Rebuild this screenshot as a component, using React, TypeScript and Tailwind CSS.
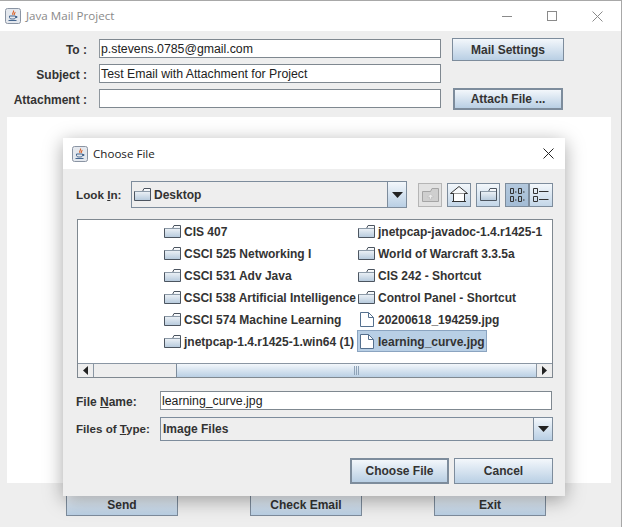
const font = "font-['Liberation_Sans',Arial,sans-serif]";

const JavaIcon = () => (
  <svg width="16" height="16" viewBox="0 0 16 16" className="shrink-0">
    <rect x="0.5" y="0.5" width="15" height="15" rx="2" fill="#e4e8ee" stroke="#8a94a3" />
    <path d="M8.5 2.5c1 1.500-2 2.500-.5 4.500M10 4c.5 1-1.500 1.500-.5 3" fill="none" stroke="#d9622b" strokeWidth="1.100" />
    <path d="M4.500 8h6v1.500c0 1-1 1.500-3 1.500s-3-.5-3-1.500zM10.500 8.500h1.500v1h-1.500M3.500 12.500h8" fill="none" stroke="#45668f" strokeWidth="1" />
  </svg>
);

const FolderIcon = () => (
  <svg width="17" height="13" viewBox="0 0 17 13" className="shrink-0">
    <defs>
      <linearGradient id="folderFill" x1="0" y1="0" x2="0" y2="1">
        <stop offset="0" stopColor="#ffffff" />
        <stop offset="1" stopColor="#b5c9dc" />
      </linearGradient>
    </defs>
    <path d="M0.500 3.500H8.500L10 0.500H16.500V12.500H0.500Z" fill="url(#folderFill)" stroke="#4c5560" />
    <path d="M1 3.500H16" stroke="#8c9aa8" />
  </svg>
);

const FileIcon = () => (
  <svg width="14" height="15" viewBox="0 0 14 15" className="ml-[2px] shrink-0">
    <path d="M0.500 0.500H8.500L13.500 5.500V14.500H0.500Z" fill="#ffffff" stroke="#55708e" />
    <path d="M8.500 0.500V5.500H13.500" fill="none" stroke="#55708e" />
  </svg>
);

const ArrowDown = () => (
  <svg width="11" height="6" viewBox="0 0 11 6">
    <path d="M0 0H11L5.500 6Z" fill="#222222" />
  </svg>
);

const Field = ({ value }: { value: string }) => (
  <div className="h-[19px] flex-1 border border-[#7f8890] border-l-[#8f979e] bg-white pl-[1px] text-[12.3px] leading-[19px] text-[#222222]">
    {value}
  </div>
);

const Button = ({ label, className }: { label: string; className: string }) => (
  <div
    className={`flex shrink-0 items-center justify-center bg-linear-to-b from-[#f3f7fb] to-[#b9cfe4] text-[12px] font-bold text-[#333333] ${className}`}
  >
    {label}
  </div>
);

const FormRow = ({ label, value, children }: { label: string; value: string; children?: React.ReactNode }) => (
  <div className="flex h-[25px] items-center">
    <div className="w-[87px] pt-[2px] text-right text-[12px] font-bold text-[#333333]">{label}</div>
    <div className="ml-[12px] flex w-[342px]">
      <Field value={value} />
    </div>
    {children}
  </div>
);

const Combo = ({ children, className }: { children: React.ReactNode; className: string }) => (
  <div className={`flex border border-[#7d8c9c] bg-[#eeeeee] ${className}`}>
    <div className="flex flex-1 items-center text-[12px] font-bold text-[#333333]">{children}</div>
    <div className="flex w-[19px] items-center justify-center border-l border-[#7d8c9c] bg-linear-to-b from-[#f3f7fb] to-[#b9cfe4]">
      <ArrowDown />
    </div>
  </div>
);

const ToolButton = ({ children, className }: { children: React.ReactNode; className?: string }) => (
  <div className={`flex h-[24px] w-[24px] items-center justify-center border border-[#7d8c9c] ${className ?? "bg-linear-to-b from-[#f3f7fb] to-[#c3d6e8]"}`}>
    {children}
  </div>
);

const col1 = [
  "CIS 407",
  "CSCI 525 Networking I",
  "CSCI 531 Adv Java",
  "CSCI 538 Artificial Intelligence",
  "CSCI 574 Machine Learning",
  "jnetpcap-1.4.r1425-1.win64 (1)",
];
const col2 = [
  { name: "jnetpcap-javadoc-1.4.r1425-1" },
  { name: "World of Warcraft 3.3.5a" },
  { name: "CIS 242 - Shortcut" },
  { name: "Control Panel - Shortcut" },
  { name: "20200618_194259.jpg", file: true },
  { name: "learning_curve.jpg", file: true, selected: true },
];

const FileRow = ({ name, file, selected }: { name: string; file?: boolean; selected?: boolean }) => (
  <div
    className={`flex h-[22px] items-center whitespace-nowrap text-[12px] font-bold text-[#333333] ${
      selected ? "w-[130px] border border-[#8ba4c0] bg-[#b8cfe5]" : "border border-transparent"
    }`}
  >
    <div className="flex w-[20px]">{file ? <FileIcon /> : <FolderIcon />}</div>
    <span className="pt-[2px]">{name}</span>
  </div>
);

const ChooseDialog = () => (
  <div className="absolute left-[63px] top-[138px] w-[502px] bg-[#eeeeee] shadow-[0_4px_18px_rgba(0,0,0,0.35)]">
    <div className="flex h-[31px] items-center bg-white pl-[9px] pr-[11px]">
      <JavaIcon />
      <span className="ml-[5px] font-['Open_Sans',sans-serif] text-[11.6px] text-[#222222]">Choose File</span>
      <svg width="11" height="11" viewBox="0 0 11 11" className="ml-auto">
        <path d="M0.500 0.500L10.500 10.500M10.500 0.500L0.500 10.500" stroke="#222222" />
      </svg>
    </div>

    <div className="pb-[12px] pl-[13px] pr-[12px]">
      <div className="mt-[12px] flex h-[27px] items-center">
        <div className="w-[55px] text-[11.7px] font-bold text-[#333333]">
          Look <u>I</u>n:
        </div>
        <Combo className="h-[27px] w-[276px]">
          <span className="ml-[2px] mr-[3px]">
            <FolderIcon />
          </span>
          Desktop
        </Combo>
        <div className="ml-[11px] flex gap-[5px]">
          <ToolButton className="border-[#b5b5b5] bg-[#e2e2e2]">
            <svg width="17" height="14" viewBox="0 0 17 14">
              <path d="M0.500 3.500H8.500L10 0.500H16.500V13.500H0.500Z" fill="#cfcfcf" stroke="#a5a5a5" />
              <path d="M8.500 6L5.500 9H7.500V11H9.500V9H11.500Z" fill="#eeeeee" stroke="#b5b5b5" strokeWidth="0.500" />
            </svg>
          </ToolButton>
          <ToolButton>
            <svg width="18" height="17" viewBox="0 0 18 17">
              <path d="M0.500 7.500L9 0.500L17.500 7.500Z" fill="#f8fafc" stroke="#333333" />
              <path d="M3.500 7.500V15.500H14.500V7.500" fill="#ffffff" stroke="#333333" />
              <path d="M2 15.500H16" stroke="#333333" />
            </svg>
          </ToolButton>
          <ToolButton>
            <FolderIcon />
          </ToolButton>
          <div className="flex">
            <ToolButton className="bg-linear-to-b from-[#b3c8dd] to-[#a3bcd5]">
              <svg width="15" height="14" viewBox="0 0 15 14" fill="none" stroke="#333333">
                <path d="M0.500 0.500H3.500V5.500H0.500ZM8.500 0.500H11.500V5.500H8.500ZM0.500 8.500H3.500V13.500H0.500ZM8.500 8.500H11.500V13.500H8.500Z" />
                <path d="M5 4H6.500M13 4H14.500M5 12H6.500M13 12H14.500" />
              </svg>
            </ToolButton>
            <ToolButton className="bg-linear-to-b from-[#f3f7fb] to-[#c3d6e8]">
              <svg width="16" height="14" viewBox="0 0 16 14" fill="none" stroke="#333333">
                <path d="M0.500 0.500H4.500V5.500H0.500ZM0.500 8.500H4.500V13.500H0.500Z" />
                <path d="M6 3.500H15.500M6 11.500H15.500" />
              </svg>
            </ToolButton>
          </div>
        </div>
      </div>

      <div className="ml-[1px] mt-[11px] h-[159px] w-[476px] border border-[#7f8890] bg-white">
        <div className="flex h-[143px] pl-[85px]">
          <div className="w-[194px]">
            {col1.map((name) => (
              <FileRow key={name} name={name} />
            ))}
          </div>
          <div>
            {col2.map((row) => (
              <FileRow key={row.name} {...row} />
            ))}
          </div>
        </div>
        <div className="flex h-[14px] border-t border-[#8a96a3]">
          <div className="flex w-[16px] items-center justify-center border-r border-[#8a96a3] bg-[#eeeeee]">
            <svg width="5" height="9" viewBox="0 0 5 9">
              <path d="M5 0V9L0 4.500Z" fill="#222222" />
            </svg>
          </div>
          <div className="w-[83px] border-r border-[#7d8c9c] bg-[#eeeeee]" />
          <div className="flex flex-1 items-center justify-center bg-linear-to-b from-[#f3f7fb] to-[#b9cfe4]">
            <div className="flex h-[9px] w-[5px] justify-center border-x border-[#8fa3b8]">
              <div className="w-[1px] bg-[#8fa3b8]" />
            </div>
          </div>
          <div className="flex w-[16px] items-center justify-center border-l border-[#8a96a3] bg-[#eeeeee]">
            <svg width="5" height="9" viewBox="0 0 5 9">
              <path d="M0 0V9L5 4.500Z" fill="#222222" />
            </svg>
          </div>
        </div>
      </div>

      <div className="mt-[13px] flex h-[19px] items-center">
        <div className="w-[84px] pt-[2px] text-[12px] leading-[16px] font-bold text-[#333333]">
          File <u>N</u>ame:
        </div>
        <div className="flex w-[392px]">
          <Field value="learning_curve.jpg" />
        </div>
      </div>

      <div className="mt-[7px] flex items-center">
        <div className="w-[84px] whitespace-nowrap text-[11.6px] font-bold text-[#333333]">
          Files of <u>T</u>ype:
        </div>
        <Combo className="h-[24px] w-[393px]">
          <span className="ml-[2px]">Image Files</span>
        </Combo>
      </div>

      <div className="mt-[17px] flex justify-end gap-[5px]">
        <Button label="Choose File" className="h-[26px] w-[99px] border-2 border-[#7d8c9c]" />
        <Button label="Cancel" className="h-[26px] w-[99px] border border-[#7d8c9c]" />
      </div>
    </div>
  </div>
);

export default function App() {
  return (
    <div className={`relative h-[527px] w-[622px] overflow-hidden bg-[#eeeeee] ${font}`}>
      <div className="flex h-[31px] items-center border-t border-[#a8a8a8] bg-white pl-[5px] pr-[19px]">
        <JavaIcon />
        <span className="ml-[5px] font-['Open_Sans',sans-serif] text-[11.6px] text-[#8a8a8a]">Java Mail Project</span>
        <div className="ml-auto flex items-center gap-[35px]">
          <div className="h-[1px] w-[10px] bg-[#8a8a8a]" />
          <div className="h-[10px] w-[10px] border border-[#8a8a8a]" />
          <svg width="11" height="11" viewBox="0 0 11 11">
            <path d="M0.500 0.500L10.500 10.500M10.500 0.500L0.500 10.500" stroke="#8a8a8a" />
          </svg>
        </div>
      </div>

      <div className="mt-[5px]">
        <FormRow label="To :" value="p.stevens.0785@gmail.com">
          <Button label="Mail Settings" className="ml-[11px] mt-[1px] h-[23px] w-[112px] border border-[#7d8c9c] pt-[1px]" />
        </FormRow>
        <FormRow label="Subject :" value="Test Email with Attachment for Project" />
        <FormRow label="Attachment :" value="">
          <Button label="Attach File ..." className="ml-[12px] h-[22px] w-[110px] border-2 border-[#7d8c9c] pt-[1px]" />
        </FormRow>
      </div>

      <div className="ml-[7px] mt-[6px] h-[366px] w-[604px] bg-white" />

      <div className="ml-[66px] mt-[11px] flex gap-[72px]">
        <Button label="Send" className="h-[22px] w-[112px] border border-[#7d8c9c]" />
        <Button label="Check Email" className="h-[22px] w-[112px] border border-[#7d8c9c]" />
        <Button label="Exit" className="h-[22px] w-[112px] border border-[#7d8c9c]" />
      </div>

      <ChooseDialog />

      <div className="absolute inset-y-0 right-0 w-[1px] bg-[#a8a8a8]" />
    </div>
  );
}
